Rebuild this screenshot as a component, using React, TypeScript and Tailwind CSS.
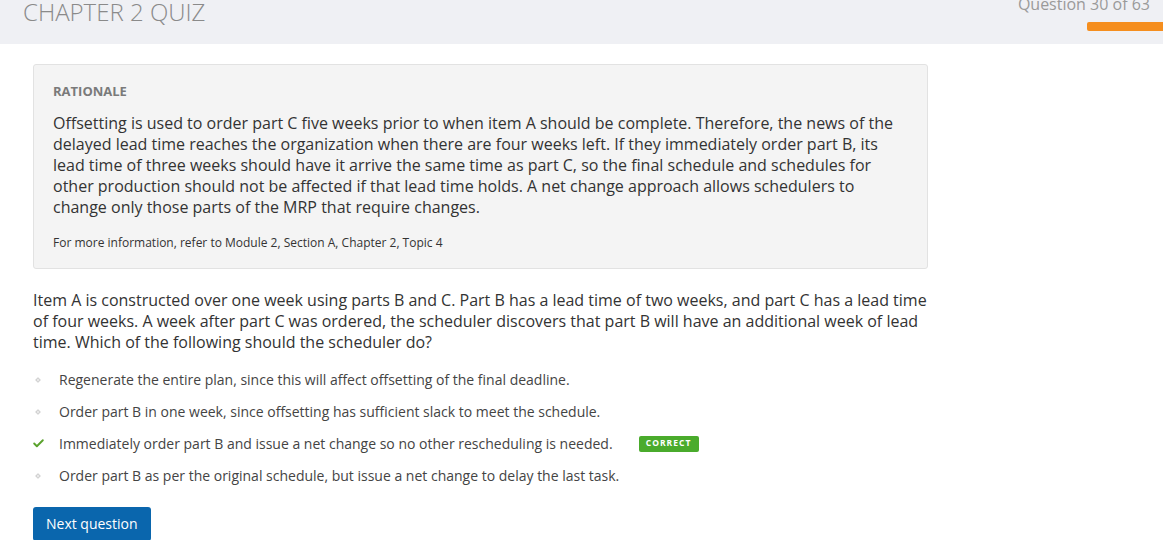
import { Check } from 'lucide-react'

const options = [
  { text: 'Regenerate the entire plan, since this will affect offsetting of the final deadline.', correct: false },
  { text: 'Order part B in one week, since offsetting has sufficient slack to meet the schedule.', correct: false },
  { text: 'Immediately order part B and issue a net change so no other rescheduling is needed.', correct: true },
  { text: 'Order part B as per the original schedule, but issue a net change to delay the last task.', correct: false },
]

export default function App() {
  return (
    <div className="min-h-screen bg-white font-['Open_Sans',sans-serif] text-[#333]">
      {/* Header */}
      <header className="h-[44px] bg-[#eff0f4] flex justify-between">
        <h1 className="pl-[23px] pt-0 text-[24px] leading-[24px] font-light text-[#8a8a8a]">
          CHAPTER 2 QUIZ
        </h1>
        <div className="flex flex-col items-end">
          <div className="pr-[13px] mt-[-6px] text-[16px] leading-[20px] text-[#9a9a9a]">Question 30 of 63</div>
          <div className="mt-[8px] w-[76px] h-[9px] bg-[#f58e1e] rounded-l-[2px]" />
        </div>
      </header>

      <main className="pl-[33px] w-[928px]">
        {/* Rationale */}
        <section className="mt-[20px] bg-[#f4f4f4] border border-[#e2e2e2] rounded-[3px] px-[19px] pt-[17px] pb-[17px]">
          <h2 className="text-[13px] leading-[18px] font-bold text-[#7a7a7a]">RATIONALE</h2>
          <p className="mt-[13px] text-[16px] leading-[21px] text-[#333]">
            Offsetting is used to order part C five weeks prior to when item A should be complete. Therefore, the news of the
            delayed lead time reaches the organization when there are four weeks left. If they immediately order part B, its
            lead time of three weeks should have it arrive the same time as part C, so the final schedule and schedules for
            other production should not be affected if that lead time holds. A net change approach allows schedulers to
            change only those parts of the MRP that require changes.
          </p>
          <p className="mt-[16px] text-[12px] leading-[17px] text-[#333]">
            For more information, refer to Module 2, Section A, Chapter 2, Topic 4
          </p>
        </section>

        {/* Question */}
        <p className="mt-[21px] text-[16px] leading-[21px] text-[#333]">
          Item A is constructed over one week using parts B and C. Part B has a lead time of two weeks, and part C has a lead time
          of four weeks. A week after part C was ordered, the scheduler discovers that part B will have an additional week of lead
          time. Which of the following should the scheduler do?
        </p>

        <ul className="mt-[11px]">
          {options.map((o) => (
            <li key={o.text} className="h-[31.9px] flex items-center text-[14px] text-[#444]">
              <span className="w-[26px] flex justify-start">
                {o.correct ? (
                  <Check className="ml-[-1px] w-[13px] h-[13px] text-[#5aa22c]" strokeWidth={3.5} />
                ) : (
                  <span className="ml-[3px] w-[4px] h-[4px] rotate-45 border border-[#cfcfcf] bg-[#ececec]" />
                )}
              </span>
              <span>{o.text}</span>
              {o.correct && (
                <span className="ml-[26px] w-[60px] h-[16px] flex items-center justify-center rounded-[2px] bg-[#4aab2c] text-white text-[8.5px] font-bold tracking-[1px]">
                  CORRECT
                </span>
              )}
            </li>
          ))}
        </ul>

        <button className="mt-[15px] h-[34px] px-[13px] rounded-[3px] bg-[#0a66ad] text-white text-[14px]">
          Next question
        </button>
      </main>
    </div>
  )
}
